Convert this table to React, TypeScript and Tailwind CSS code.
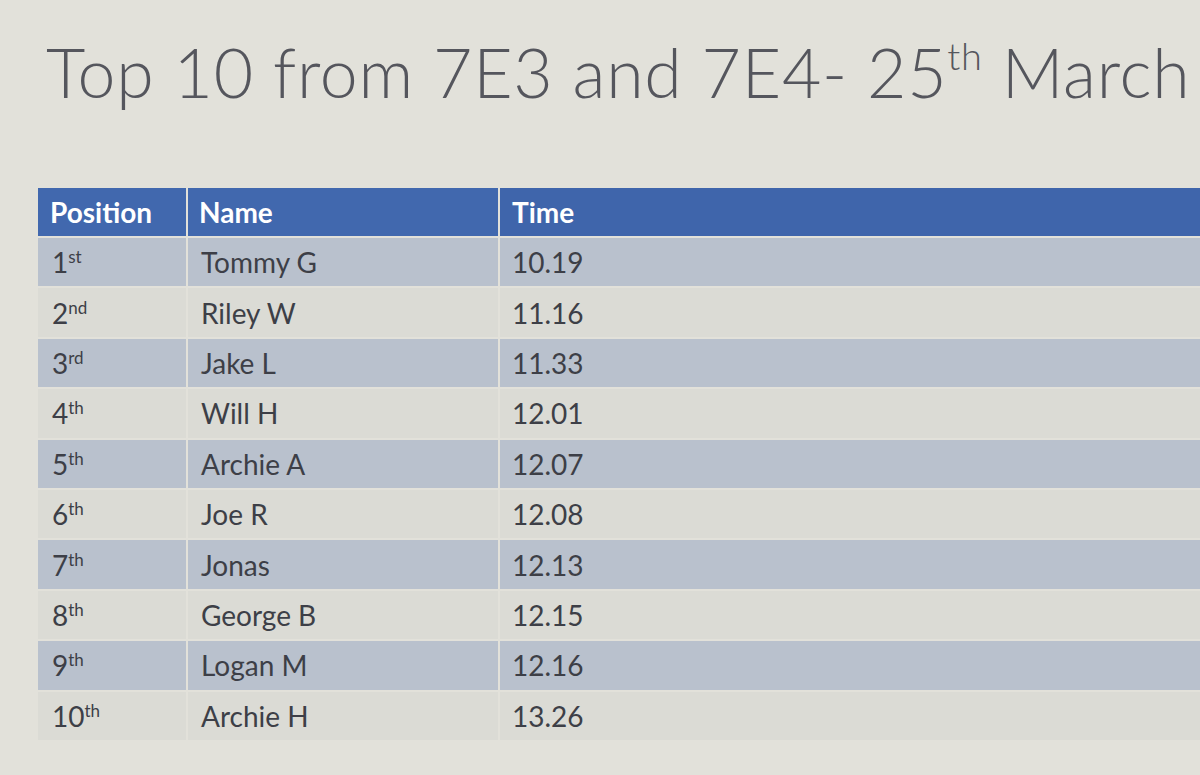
import React from "react";

const rows = [
  { n: "1", s: "st", name: "Tommy G", time: "10.19" },
  { n: "2", s: "nd", name: "Riley W", time: "11.16" },
  { n: "3", s: "rd", name: "Jake L", time: "11.33" },
  { n: "4", s: "th", name: "Will H", time: "12.01" },
  { n: "5", s: "th", name: "Archie A", time: "12.07" },
  { n: "6", s: "th", name: "Joe R", time: "12.08" },
  { n: "7", s: "th", name: "Jonas", time: "12.13" },
  { n: "8", s: "th", name: "George B", time: "12.15" },
  { n: "9", s: "th", name: "Logan M", time: "12.16" },
  { n: "10", s: "th", name: "Archie H", time: "13.26" },
];

const font = { fontFamily: "Lato, 'Open Sans', sans-serif" };

export default function App() {
  return (
    <div
      className="w-[1200px] h-[775px] overflow-hidden bg-[#e2e1da] text-[#3d3f47]"
      style={font}
    >
      {/* slide title */}
      <h1 className="pl-[46px] pt-[38px] text-[68px] leading-none font-light tracking-[0.7px] text-[#55565d] whitespace-nowrap">
        Top 10 from 7E3 and 7E4- 25
        <sup className="text-[38px] -top-[28px]">th</sup> March
      </h1>

      {/* table */}
      <div className="ml-[38px] mt-[82px] flex flex-col gap-[2px]">
        <div className="grid grid-cols-[148px_310px_1fr] gap-[2px] h-[48px]">
          <div className="bg-[#4168ae] text-white font-bold text-[28px] flex items-center pl-[12px]">
            Position
          </div>
          <div className="bg-[#4168ae] text-white font-bold text-[28px] flex items-center pl-[11px]">
            Name
          </div>
          <div className="bg-[#3f65ab] text-white font-bold text-[28px] flex items-center pl-[12px]">
            Time
          </div>
        </div>

        {rows.map((r, i) => {
          const bg = i % 2 === 0 ? "bg-[#b9c1cd]" : "bg-[#dbdbd5]";
          return (
            <div
              key={r.name}
              className="grid grid-cols-[148px_310px_1fr] gap-[2px] h-[48.4px] text-[28px]"
            >
              <div className={`${bg} flex items-center pl-[14px]`}>
                <span>
                  {r.n}
                  <sup className="text-[17px] -top-[10px]">{r.s}</sup>
                </span>
              </div>
              <div className={`${bg} flex items-center pl-[13px]`}>{r.name}</div>
              <div className={`${bg} flex items-center pl-[12px]`}>{r.time}</div>
            </div>
          );
        })}
      </div>
    </div>
  );
}
